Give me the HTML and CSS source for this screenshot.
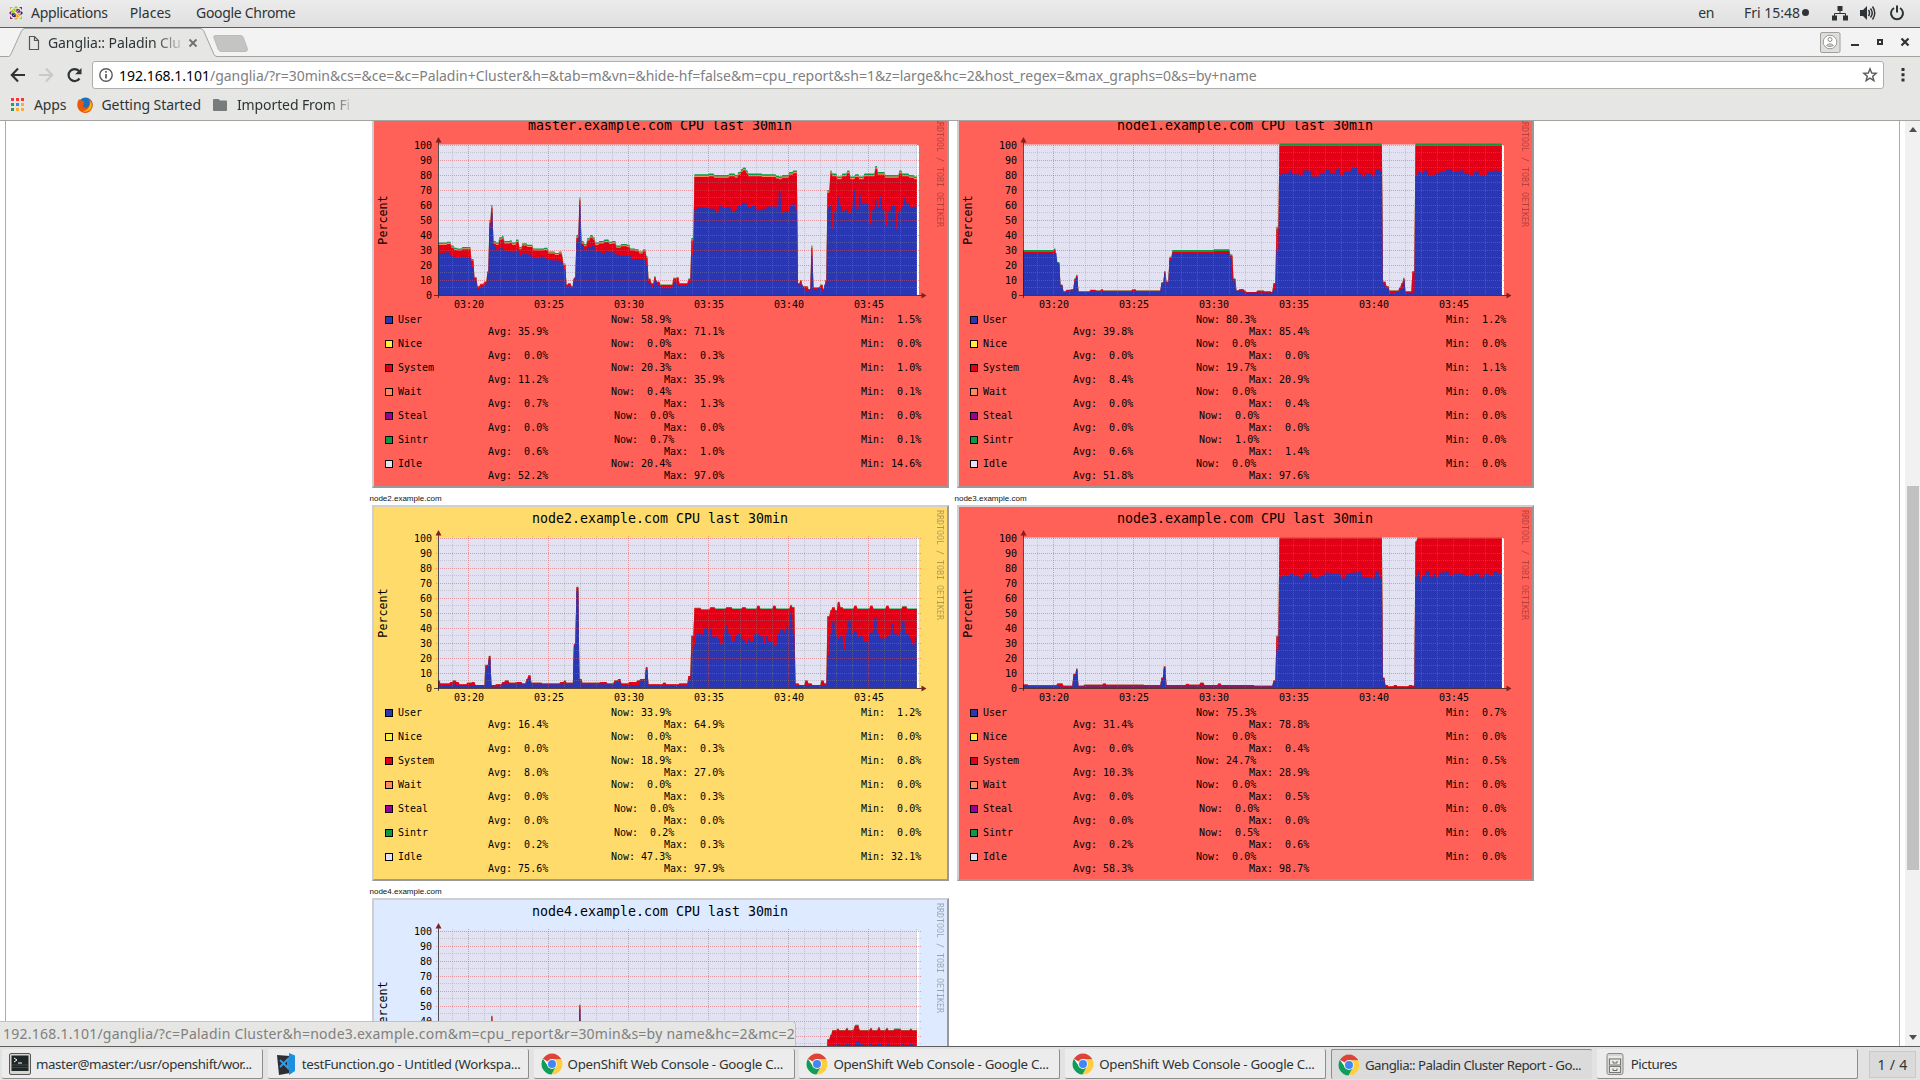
FILE: index.html
```html
<!DOCTYPE html>
<html lang="en">
<head>
<meta charset="utf-8">
<title>Ganglia:: Paladin Cluster Report</title>
<link rel="stylesheet" href="styles.css">
</head>
<body>
<svg class="defs" width="0" height="0">
  <symbol id="chrome" viewBox="0 0 48 48">
    <circle cx="24" cy="24" r="23" fill="#fff"/>
    <path d="M24 24 4.1 12.5A23 23 0 0 1 43.9 12.5L44 14H24Z" fill="#db4437"/>
    <path d="M24 14H44.7A23 23 0 0 1 23 47L33 29Z" fill="#ffcd40"/>
    <path d="M4.1 12.5A23 23 0 0 0 23 47L32.7 29 24 24 15 28.500Z" fill="#0f9d58"/>
    <circle cx="24" cy="24" r="11" fill="#f1f1f1"/>
    <circle cx="24" cy="24" r="8.700" fill="#4285f4"/>
  </symbol>
</svg>

<header class="topbar">
  <svg class="distro" width="14" height="14" viewBox="0 0 14 14">
    <path d="M7 0 9.500 2.500H4.500Z" fill="#9c3"/><path d="M3 3h4v4H3z" fill="#9ccd2a"/><path d="M7 3h4v4H7z" fill="#932279"/>
    <path d="M3 7h4v4H3z" fill="#262577"/><path d="M7 7h4v4H7z" fill="#efa724"/>
    <path d="M14 7 11.500 9.500v-5Z" fill="#262577"/><path d="M7 14 4.500 11.500h5Z" fill="#efa724"/><path d="M0 7 2.500 4.500v5Z" fill="#932279"/>
    <path d="M1 1h3L1 4z" fill="#efa724"/><path d="M13 1v3l-3-3z" fill="#932279"/><path d="M1 13v-3l3 3z" fill="#932279"/><path d="M13 13h-3l3-3z" fill="#9ccd2a"/>
    <path d="M2 2 12 12M12 2 2 12M7 2v10M2 7h10" stroke="#fff" stroke-width=".5"/>
  </svg>
  <span class="t t-apps">Applications</span>
  <span class="t t-places">Places</span>
  <span class="t t-chrome">Google Chrome</span>
  <span class="t t-en">en</span>
  <span class="t t-clock">Fri 15:48</span><i class="dot"></i>
  <svg class="net" width="16" height="16" viewBox="0 0 16 16"><path d="M5.500 1h5v5h-5zM0 10.500h5v5H0zM11 10.500h5v5h-5z" fill="#2e3436"/><path d="M8 6v2.500M2.500 11V8.500h11V11" fill="none" stroke="#2e3436"/></svg>
  <svg class="vol" width="16" height="16" viewBox="0 0 16 16"><path d="M0 5h3l4-4v14l-4-4H0z" fill="#2e3436"/><path d="M8.500 5q2 3 0 6M10.500 3.500q3.500 4.500 0 9M12.500 1.500q4.500 6.500 0 13" fill="none" stroke="#2e3436" stroke-width="1.500"/></svg>
  <svg class="pow" width="16" height="16" viewBox="0 0 16 16"><path d="M5 3a6 6 0 1 0 6 0M8 .5v7" fill="none" stroke="#2e3436" stroke-width="2"/></svg>
</header>

<div class="tabstrip">
  <svg class="tabshape" width="250" height="29" viewBox="0 0 250 29">
    <path d="M0 28.500H8.500q2 0 3-3L22 2.500Q22.800.5 25 .5H200q2.500 0 3.500 2l10.500 24q1 2 3 2H250V29H0z" fill="#e6e6e4"/>
    <path d="M0 28.500H8.500q1.500 0 2.500-2.500L21.500 3Q22.500.5 25 .5H200q2.500 0 3.500 2l10.500 24q1 2 3 2H250" fill="none" stroke="#a3a3a2"/>
    <path d="M215.500 7.500h25q2 0 2.800 2l4 11q.7 3-2 3h-24q-2 0-3-2l-4.500-12q-.5-2 1.700-2Z" fill="#c4c4c3" stroke="#bbb"/>
    <path d="M29.500 8.500h5l4 4v9h-9zM34.500 8.500v4h4" fill="none" stroke="#555" stroke-width="1.200"/>
    <path d="M189.500 11.500l7 7m0-7l-7 7" stroke="#6f6f6f" stroke-width="1.800"/>
  </svg>
  <span class="t t-tab">Ganglia:: Paladin Clu</span>
  <svg class="wm" width="100" height="29" viewBox="0 0 100 29">
    <rect x=".5" y="4.500" width="19.500" height="20" rx="1.500" fill="#dededc" stroke="#a0a09d"/>
    <circle cx="10" cy="14" r="6.800" fill="#fff" stroke="#999"/><circle cx="10" cy="11.500" r="2" fill="none" stroke="#888"/><path d="M6.500 17.500q3.500-3.500 7 0-3.500 2.500-7 0Z" fill="#ccc" stroke="#888" stroke-width=".8"/>
    <path d="M31 17h8" stroke="#2e3436" stroke-width="2"/><rect x="58" y="12" width="4" height="4" fill="none" stroke="#2e3436" stroke-width="2"/>
    <path d="M81.500 10.500l7 7m0-7l-7 7" stroke="#2e3436" stroke-width="2.200"/>
  </svg>
</div>

<div class="toolbar">
  <svg class="nav" width="82" height="28" viewBox="0 0 82 28">
    <path d="M25 14H12M18 7.500 11.800 14l6.200 6.500" fill="none" stroke="#2e3436" stroke-width="2.100"/>
    <path d="M39 14H52M46 7.500 52.200 14 46 20.500" fill="none" stroke="#c9c9c8" stroke-width="2.100"/>
    <path d="M79.500 17.500A6 6 0 1 1 79 10" fill="none" stroke="#2e3436" stroke-width="2.200"/><path d="M81.500 7v6.300h-6.300z" fill="#2e3436"/>
  </svg>
  <div class="omnibox">
    <svg width="14" height="14" viewBox="0 0 14 14"><circle cx="7" cy="7" r="6.200" fill="none" stroke="#5a5a5a" stroke-width="1.400"/><path d="M7 6v4.500M7 3v1.700" stroke="#5a5a5a" stroke-width="1.700"/></svg>
    <span class="t t-url"><b>192.168.1.101</b>/ganglia/?r=30min&amp;cs=&amp;ce=&amp;c=Paladin+Cluster&amp;h=&amp;tab=m&amp;vn=&amp;hide-hf=false&amp;m=cpu_report&amp;sh=1&amp;z=large&amp;hc=2&amp;host_regex=&amp;max_graphs=0&amp;s=by+name</span>
    <svg class="star" width="16" height="16" viewBox="0 0 16 16"><path d="M8 1.800 9.700 6l4.500.3-3.500 2.900 1.200 4.500L8 11.200l-3.900 2.500 1.200-4.500L1.800 6.300 6.300 6Z" fill="none" stroke="#5a5a5a" stroke-width="1.400"/></svg>
  </div>
  <svg class="menu" width="4" height="14" viewBox="0 0 4 14"><path d="M.5 0h3v3h-3zM.5 5.300h3v3h-3zM.5 10.600h3v3h-3z" fill="#2e3436"/></svg>
</div>

<div class="bookmarks">
  <svg class="apps" width="13" height="13" viewBox="0 0 13 13"><path d="M0 0h3v3H0zM5 0h3v3H5zM10 0h3v3h-3z" fill="#f33"/><path d="M0 5h3v3H0zM0 10h3v3H0z" fill="#2a9d57"/><path d="M5 5h3v3H5z" fill="#2f8be8"/><path d="M10 5h3v3h-3zM5 10h3v3H5zM10 10h3v3h-3z" fill="#fa3"/></svg>
  <span class="t t-bapps">Apps</span>
  <svg class="fox" width="16" height="16" viewBox="0 0 16 16"><circle cx="8.500" cy="7.500" r="7" fill="#1d6fc0"/><path d="M11 2q5 2 4.800 6.500A7.700 7.700 0 0 1 .3 8Q.3 4.500 2 2q1 1.500 3 1.500L7.500 5Q6 5.500 7 7.500q-2 1.500 0 3 2.500 1 4-.5 3-3 0-8Z" fill="#e8590c"/><path d="M13.500 4q3 5-1 9-3 2.500-6.500 1.500 7-1 7.500-10.500Z" fill="#fcb813"/></svg>
  <span class="t t-gs">Getting Started</span>
  <svg class="folder" width="14" height="12" viewBox="0 0 15 12" preserveAspectRatio="none"><path d="M1 0h5l1.500 1.500H14q1 0 1 1V11q0 1-1 1H1q-1 0-1-1V1q0-1 1-1Z" fill="#777b7b"/></svg>
  <span class="t t-imp">Imported From Fi</span>
</div>

<main class="viewport">
  <div class="page"><div class="grid" id="grid"></div></div>
  <div class="scroll"><i class="up"></i><i class="thumb"></i><i class="down"></i></div>
  <div class="status"><span class="t t-status">192.168.1.101/ganglia/?c=Paladin Cluster&amp;h=node3.example.com&amp;m=cpu_report&amp;r=30min&amp;s=by name&amp;hc=2&amp;mc=2</span></div>
</main>

<footer class="taskbar">
  <div class="task"><svg width="22" height="22" viewBox="0 0 22 22"><rect x=".5" y=".5" width="21" height="21" rx="1.500" fill="#d6d6d0" stroke="#555"/><rect x="2.500" y="2.500" width="17" height="15.500" fill="#1f2726"/><path d="M5 5l3 2-3 2M9 10h4" stroke="#fff" fill="none"/><path d="M3 12h16M3 14.500h16" stroke="#3d4a48"/></svg><span class="t t-k1">master@master:/usr/openshift/wor...</span></div>
  <div class="task"><svg width="22" height="22" viewBox="0 0 22 22"><path d="M2 2l13 1v17L4 22Z" fill="#2d2d33"/><path d="M14 0l6 2.500V18l-6 4Z" fill="#1b8fe0"/><path d="M5 7l8 8V6l-8 8" fill="none" stroke="#2aa0ee" stroke-width="1.800"/></svg><span class="t t-k2">testFunction.go - Untitled (Workspa...</span></div>
  <div class="task"><svg width="22" height="22"><use href="#chrome"/></svg><span class="t t-k3">OpenShift Web Console - Google C...</span></div>
  <div class="task"><svg width="22" height="22"><use href="#chrome"/></svg><span class="t t-k3">OpenShift Web Console - Google C...</span></div>
  <div class="task"><svg width="22" height="22"><use href="#chrome"/></svg><span class="t t-k3">OpenShift Web Console - Google C...</span></div>
  <div class="task active"><svg width="22" height="22"><use href="#chrome"/></svg><span class="t t-k6">Ganglia:: Paladin Cluster Report - Go...</span></div>
  <div class="task"><svg width="22" height="22" viewBox="0 0 22 22"><rect x="3" y=".5" width="16" height="21" rx="2" fill="#d4d4d1" stroke="#8a8a86"/><path d="M4 4h14" stroke="#fff"/><rect x="5.500" y="6" width="11" height="6" fill="#e9e9e6" stroke="#777"/><rect x="5.500" y="13.500" width="11" height="6" fill="#e9e9e6" stroke="#777"/><path d="M9 8v2h4V8M9 15.500v2h4v-2" fill="none" stroke="#666"/></svg><span class="t t-k7">Pictures</span></div>
  <div class="pager"><span class="t t-pg">1 / 4</span></div>
</footer>
<script src="charts.js"></script>
</body>
</html>
```
FILE: styles.css
```css
* { box-sizing: border-box; }
body { margin: 0; width: 1920px; height: 1080px; overflow: hidden; display: flex; flex-direction: column; background: #fff; font: 14px "Noto Sans", "Open Sans", sans-serif; color: #2e3436; }
svg { display: block; flex: none; }
.defs { position: absolute; }
.t { white-space: pre; flex: none; }

.topbar { height: 28px; flex: none; display: flex; align-items: center; padding: 0 15px 2px 9px; background: linear-gradient(#ececec, #dfdfdf); border-bottom: 1px solid #5e5e5e; }
.t-apps { margin-left: 8px; letter-spacing: -.31px; }
.t-places { margin-left: 22px; }
.t-chrome { margin-left: 25px; letter-spacing: -.3px; }
.t-en { margin-left: auto; letter-spacing: -.4px; }
.t-clock { margin-left: 30px; }
.dot { width: 7px; height: 7px; border-radius: 50%; background: #2e3436; margin: 0 23px 0 2px; }
.vol { margin-left: 12px; }
.pow { margin-left: 13px; }

.tabstrip { height: 29px; flex: none; display: flex; background: #f3f3f3; border-bottom: 1px solid #a3a3a2; position: relative; }
.tabshape { margin-right: auto; }
.t-tab { position: absolute; left: 48px; top: 5px; letter-spacing: -.1px; -webkit-mask-image: linear-gradient(90deg, #000 80%, transparent 104%); mask-image: linear-gradient(90deg, #000 80%, transparent 104%); }

.toolbar { height: 36px; flex: none; display: flex; align-items: center; background: #e6e6e4; }
.omnibox { margin-left: 10px; width: 1792px; height: 28px; display: flex; align-items: center; background: #fff; border: 1px solid #aeaeac; border-radius: 3px; padding: 0 5px 0 6px; }
.t-url { margin-left: 6px; color: #808080; letter-spacing: -.028px; }
.t-url b { font-weight: 400; color: #000; }
.star { margin-left: auto; }
.menu { margin-left: 16.5px; }

.bookmarks { height: 28px; flex: none; display: flex; align-items: center; background: #e6e6e4; border-bottom: 1px solid #a3a3a2; padding: 0 0 4px 11px; }
.t-bapps { margin-left: 10px; letter-spacing: -.1px; }
.fox { margin-left: 11px; }
.t-gs { margin-left: 8px; letter-spacing: -.08px; }
.folder { margin-left: 12px; }
.t-imp { margin-left: 10px; letter-spacing: -.1px; -webkit-mask-image: linear-gradient(90deg, #000 82%, transparent 104%); mask-image: linear-gradient(90deg, #000 82%, transparent 104%); }

.viewport { flex: 1; min-height: 0; display: flex; position: relative; overflow: hidden; }
.page { margin-left: 5px; width: 1895px; border: solid #ababab; border-width: 0 1px; overflow: hidden; height: 925px; }
.grid { margin: -26px 0 0 363px; display: grid; grid-template-columns: 585px 585px; grid-auto-rows: 393px; }
.host { font: 8px/13px "Liberation Sans", sans-serif; color: #111; height: 17px; padding: 4px 0 0 .5px; }
.card { margin-left: 3px; width: 577px; height: 376px; border: 2px solid; border-color: #cfcfcf #9a9a9a #9a9a9a #cfcfcf; font-family: "DejaVu Sans Mono", monospace; color: #000; }
.red { background: #ff6057; }
.yellow { background: #ffdb6b; }
.blue { background: #ddeaff; }
.plot { display: block; width: 573px; height: 200px; }
.plot text { font-size: 10px; }
.plot .title { font-size: 13.300px; }
.plot .axis { font-size: 11.700px; }
.plot .mark { font-size: 8.300px; fill: #000; opacity: .3; }
.legend { font-size: 10px; line-height: 12px; }
.entry { height: 24px; display: grid; grid-template-columns: 11px 13px 213px 1fr; }
.swatch { width: 8px; height: 8px; border: 1px solid #000; margin-top: 2px; grid-column: 2; }
.line { display: flex; white-space: pre; }
.first { grid-column: 3 / 5; }
.name { width: 213px; }
.now { width: 250px; }
.shift { padding-left: 3px; }
.second { grid-column: 1 / 5; padding-left: 114px; }
.avg { width: 176px; }

.scroll { margin-left: auto; width: 15px; background: #f1f1f1; display: flex; flex-direction: column; align-items: center; }
.up, .down { border: 4px solid transparent; width: 0; height: 0; }
.up { border-bottom: 5px solid #505050; border-top: 0; margin-top: 6px; }
.down { border-top: 5px solid #505050; border-bottom: 0; margin: auto 0 6px; }
.thumb { width: 12px; height: 384px; background: #c1c1c1; margin-top: 354px; }
.status { position: absolute; left: 0; bottom: 0; width: 796px; height: 25px; background: #e6e6e4; border: solid #c2c2c1; border-width: 1px 1px 0 0; border-top-right-radius: 4px; padding: 2px 0 0 3px; color: #808080; letter-spacing: .235px; }

.taskbar { height: 34px; flex: none; border-top: 1px solid #5e5e5e; background: #e2e2e2; display: flex; gap: 4.8px; padding: 2px 4px 1px 2px; }
.task { width: 261px; flex: none; display: flex; align-items: center; gap: 5px; padding-left: 7px; background: #ececec; border: solid #8d8d8d; border-width: 0 1px 1px 0; border-radius: 2px; font-size: 13.300px; }
.active { background: #dbdbdb; border-width: 1px 0 0 1px; padding-left: 6px; }
.t-k1 { letter-spacing: -.42px; }
.t-k2 { letter-spacing: -.34px; }
.t-k3 { letter-spacing: -.3px; }
.t-k6 { letter-spacing: -.54px; }
.t-k7 { letter-spacing: -.5px; }
.t-pg { letter-spacing: .3px; }
.pager { margin-left: auto; width: 47px; height: 27px; margin-top: 2px; border: 1px solid #c9c9c9; background: #dadada; display: flex; align-items: center; justify-content: center; }
```
FILE: charts.js
```js
// Each series is a list of x:value steps, x in plot pixels (16 per minute), value in percent.
const hosts = [
  { name: 'master', tone: 'red', wait: 0.8, green: 1,
    user: '0:28 6:28.5 11:26.5 14:25 22:25.5 27:25 32:18 35:10 38:4 41:5.5 45:7 48:14 50:45 52:55 54:33 57:30.5 60:31.5 64:30 67:29 73:28.5 77:30 80:26 83:27.5 88:27 93:25 97:24.5 101:25.5 107:24 112:23 120:22.5 124:17 127:5 129:6 132:4.5 134:11 137:36 140:60 142:33 145:30 148:32 152:33 156:29 162:28 167:29.5 170:28.5 176:27 180:26 188:26.5 192:24 204:23.5 207:20 209:8 212:5.5 215:10 218:6.5 222:4.5 234:8.5 238:6.5 242:6 247:6.5 249:8 252:27 255:57 258:58.5 264:58 270:57.5 277:55 280:60 283:58.5 292:55.5 296:57 299:60 303:61.5 308:58.5 313:60 317:56.5 323:57.5 328:59 338:56 339.5:70 342:54.5 345:56 351:59.5 353.5:61 356:57 358.5:7 364:5 366:2.5 369:3 372:26 374:3.5 379:5 383:2 385:7 388:57 390:60 393:44 395:56 398:66 400:60 403:56 406:57 409:54 412:58 414:70.5 417:57 420:68 422:61 430:47 433:57 436:63.5 438:58 441:66 443:57 446:46 449:56 452:60 457:44 459:56 462:59 465:65.5 467:61 471:58 474:59',
    top: '0:35 8:35.5 12:33 15:31.5 18:31 23:32 27:32 32:24 35:12 38:6 41:7.5 45:9 48:16 50:50 52:60 54:36 57:35 60:38.5 63:39.5 65:36 71:36.5 73:35 77:37 80:32 83:34.5 88:33.5 94:31 100:31 105:31.5 109:29 116:28 120:29 123:26 124:21 127:7 129:8 132:6 135:12 137:40 140:65 142:36 145:34 148:38 151:40 154:38.5 156:35 160:36 165:37 170:35.5 173:36 177:33 182:34 188:33.5 191:31 196:30.5 200:29 204:30.5 207:26 209:11 212:8 215:12.5 217:9 221:7 234:11.5 238:12 240:8 249:11 252:38 255:80.5 270:81 275:80 290:81 296:80 299:82 302:84 304:85 307:83 309:81 323:80.5 337:79.5 340:79 343:80 350:82 354:83 358.5:8 361:10 363:6 369:4 372:33 374:5 381:7 384:4 386:10 388:70 391:83 393:81 398:79 403:81 408:83 411:79 416:80.5 420:79 425:81 436:86 438.5:82 446:80 460:83 463:81 470:80 475:79',
    rows: ['58.9 1.5 35.9 71.1', '0.0 0.0 0.0 0.3', '20.3 1.0 11.2 35.9', '0.4 0.1 0.7 1.3', '0.0 0.0 0.0 0.0', '0.7 0.1 0.6 1.0', '20.4 14.6 52.2 97.0'] },
  { name: 'node1', tone: 'red', wait: 0, green: 1.4,
    user: '0:28 33:21 36:6 39:2 44:3 50:9 52:12 54:2 137:8 140:15 142:8 145:23 148:28 206:25 208:10 211:3 217:2 220:1.5 249:4 252:30 255:80 257:81 265:83 268:80.5 275:80 279:83 287:79 294:79 296:81 301:83.5 306:81 312:84 314:84.5 316:80 320:82 327:85 334:81 338:79 342:81 348:79 351:84 356:82 358.5:7 362:5 365:1 372:2 376:4 379:10 381:1.5 391:80 394:82 398:81 400:83 404:80 411:81 416:82 422:84 428:82 435:83 440:81 445:80 450:82 455:80 463:82 470:83 474:82',
    top: '0:30 30:31 32:22 36:7 39:2.5 42:3.5 47:4 50:11 52:13.5 54:2.5 66:3.5 72:3 77:4 79:3 108:3.7 112:3 137:8.5 140:16 142:9 145:25.5 148:30 190:30.5 206:27 209:11 212:3 215:4 220:3 222:2 233:3 240:2.5 247:2 249:8 252:45.5 255:101 358.5:9 362:6 365:3 375:5 377:8 379:11.5 381:2.5 388:16 391:101',
    rows: ['80.3 1.2 39.8 85.4', '0.0 0.0 0.0 0.0', '19.7 1.1 8.4 20.9', '0.0 0.0 0.0 0.4', '0.0 0.0 0.0 0.0', '1.0 0.0 0.6 1.4', '0.0 0.0 51.8 97.6'] },
  { name: 'node2', tone: 'yellow', wait: 0, green: 0.4,
    user: '0:1.8 14:3 17:2 47:14 49.5:20 52:1 63:2.5 87:4 89:6.5 92:2.5 134.5:28 137:65 140:5 142:2.5 176:4 182:2 201:5 206.5:12 209:1.5 249:5 252:23 255:29 257:36 262:35.5 265:40.5 269:36 271:40 273:34 276:35 278:33 281:29 284:38 287:42 289:36 292:31 296:35 299:36 303:32 306:30 309:33 311:31 315:36 320:35 324:30 327:35 329:31 335:28 338:36 341:39 345:37 347:41 351:51 353.5:36 356:1.5 366:3 367:1.5 388:22 391:36 393:44 396:36 398:33 401:35 404:26 407:37 409:45.5 412:36 415:38 418:34 420:35 424:31 430:37 435:47 438:36 441:33 448:35 452:43 455:36 458:35 461:38 463:45 466:36 470:33 473:29 476:34',
    top: '0:5 1:3 11:4 14:5 17:4 20:2.5 28:3.5 33:4 36:2 46:15.5 49.5:21.5 52:2 57:2.5 63:4 66:5 70:3.5 77:4 83:3 87:6 89:8.5 92:3.5 103:3 121:4 125:5 127:3.5 134.5:29.5 137:67.5 140:6 143:3.5 161:4 168:3 175:5 179:6 182:3 190:4 198:5 201:6 206.5:14 209:2.5 224:3.5 227:2.5 240:3 249:8 252:35 255:53.5 262:52.5 271:54 276:53 287:54 293:53 303:54 307:53 318:55 321:53 334:55 337:53 351:55.5 353:54 356:3 360:2 366:5 369:3 373:2 382:5 385:3 388:48 391:52 393:54 396:52 398.5:57.5 401:54 404:53 415:55 418:53 431:55 434:53 447:55 450:53 463:54.5 468:53',
    rows: ['33.9 1.2 16.4 64.9', '0.0 0.0 0.0 0.3', '18.9 0.8 8.0 27.0', '0.0 0.0 0.0 0.3', '0.0 0.0 0.0 0.0', '0.2 0.0 0.2 0.3', '47.3 32.1 75.6 97.9'] },
  { name: 'node3', tone: 'red', wait: 0, green: 0.7,
    user: '0:1.5 36:.8 49:8 52:12 54:1 137:6 139.5:13.5 142:1 249:4 252:26 255:73 257:75 266:76 270:75 275:73 279:76 283:77 288:74 292:73 295:75 301:77 305:76 317:73 322:76 328:77 335:78 338:74 347:73 351:78 355:74 358.5:6 361:.6 391:74 393:77 396:71 398:75 402:78 406:74 409:76 412:74 415:77 422:78 425:75 430:76 440:75 450:76 456:74 460:76 465:75 470:78 473:76',
    top: '0:2.3 4:1.8 33:3 39:1.5 49:9.5 52:13 54:1.5 60:2.2 79:3 82:2.2 120:2 137:7 139.5:14.5 142:2 162:2.8 165:2.2 176:3.5 180:2 194:3 197:2 230:1.5 249:5 252:35 255:100.5 358.5:7 361:2 364:1.2 370:2 373:1.2 385:2 388:1.5 391:98 393:100.5',
    rows: ['75.3 0.7 31.4 78.8', '0.0 0.0 0.0 0.4', '24.7 0.5 10.3 28.9', '0.0 0.0 0.0 0.5', '0.0 0.0 0.0 0.0', '0.5 0.0 0.2 0.6', '0.0 0.0 58.3 98.7'] },
  { name: 'node4', tone: 'blue', wait: 0, green: 0.5,
    user: '0:2 52:8 54:2 140:48 142:2 388:22 397:24.5 401:23 407:25 410:24 417:26.5 420:24.5 425:23.5 430:25 433:24 439:25 443:23 448:25 450:24 462:24.5 465:23.5 471:25 474:23',
    top: '0:3 52:43.5 54:3 140:51 142:3 388:28 391:31 393:34 398:35 400:34 407:35.5 409:34 415:36.5 416:37.5 420:34.5 421:34 431:35.5 433:34 439:36 441:34 447:35.5 449:34 455:35 462:34 471:35 473:34',
    rows: [] }
];
const kinds = [['User', '#2a37b5'], ['Nice', '#ffec3d'], ['System', '#e30016'], ['Wait', '#ff8a60'], ['Steal', '#990099'], ['Sintr', '#0a9a42'], ['Idle', '#e2e2f2']];

// Steps are joined by short ramps; thin upper layers shrink along with small totals.
function area(series, less, color) {
  let d = '';
  for (const step of series.split(' ')) {
    const [x, v] = step.split(':').map(Number);
    const y = (150 - Math.max(0, v - less * Math.min(1, v / 40)) * 1.5).toFixed(1);
    d += d ? `H${(x + .4).toFixed(1)}L${(x + 1.4).toFixed(1)} ${y}` : `M0 150V${y}`;
  }
  return `<path d="${d}H479V150Z" fill="${color}"/>`;
}

function gridLines() {
  let s = '';
  for (let v = 0; v <= 100; v += 5) {
    const y = 150.5 - v * 1.5 - (v % 10 ? .5 : 0);
    s += `<path d="M-2 ${y}H483" stroke="${v % 10 ? '#8f8f8f' : '#de4f4f'}" stroke-opacity="${v % 10 ? .36 : .5}" stroke-dasharray="1 1"/>`;
  }
  for (let m = 0; m < 30; m++) {
    const major = m % 5 === 1;
    s += `<path d="M${14.5 + 16 * m} -2V152" stroke="${major ? '#de4f4f' : '#8f8f8f'}" stroke-opacity="${major ? .5 : .36}" stroke-dasharray="1 1"/>`;
  }
  return s;
}

function plot(h) {
  let labels = '';
  for (let v = 0; v <= 100; v += 10) labels += `<text x="58" y="${185 - v * 1.5}" text-anchor="end">${v}</text>`;
  for (let i = 0; i < 6; i++) labels += `<text x="${95 + 80 * i}" y="194" text-anchor="middle">03:${20 + 5 * i}</text>`;
  return `<svg class="plot" viewBox="0 0 573 200">
    <text class="title" x="286" y="16.300" text-anchor="middle">${h.name}.example.com CPU last 30min</text>
    <text class="axis" transform="translate(12.500 106) rotate(-90)" text-anchor="middle">Percent</text>
    <text class="mark" transform="translate(562.500 3) rotate(90)">RRDTOOL / TOBI OETIKER</text>
    <g transform="translate(64 31)">
      <rect width="481" height="150" fill="#fff"/><rect y="-.5" width="479" height="150.500" fill="#e2e2f2"/>
      ${area(h.top, 0, '#0a9a42')}${area(h.top, h.green, '#ff8a60')}${area(h.top, h.green + h.wait, '#e30016')}${area(h.user, 0, '#2a37b5')}
      ${gridLines()}
      <path d="M.5 153V-4M-4 150.500H484" stroke="#222" stroke-opacity=".75" fill="none"/>
      <path d="M-2.500-2.500.5-8 3.500-2.500ZM483.500 147.500l5 3-5 3Z" fill="#802020"/>
    </g>${labels}</svg>`;
}

function legend(h) {
  const pct = v => v.padStart(5) + '%';
  return h.rows.map((row, i) => {
    const [name, color] = kinds[i];
    const [now, min, avg, max] = row.split(' ');
    const shift = name === 'Steal' || name === 'Sintr';
    return `<div class="entry"><i class="swatch" style="background:${color}"></i>
      <div class="line first"><span class="name">${name}</span><span class="now${shift ? ' shift' : ''}">Now:${pct(now)}</span><span>Min:${pct(min)}</span></div>
      <div class="line second"><span class="avg">Avg:${pct(avg)}</span><span>Max:${pct(max)}</span></div></div>`;
  }).join('');
}

document.getElementById('grid').innerHTML = hosts.map(h =>
  `<section><div class="host">${h.name}.example.com</div><div class="card ${h.tone}">${plot(h)}<div class="legend">${legend(h)}</div></div></section>`).join('');
```
